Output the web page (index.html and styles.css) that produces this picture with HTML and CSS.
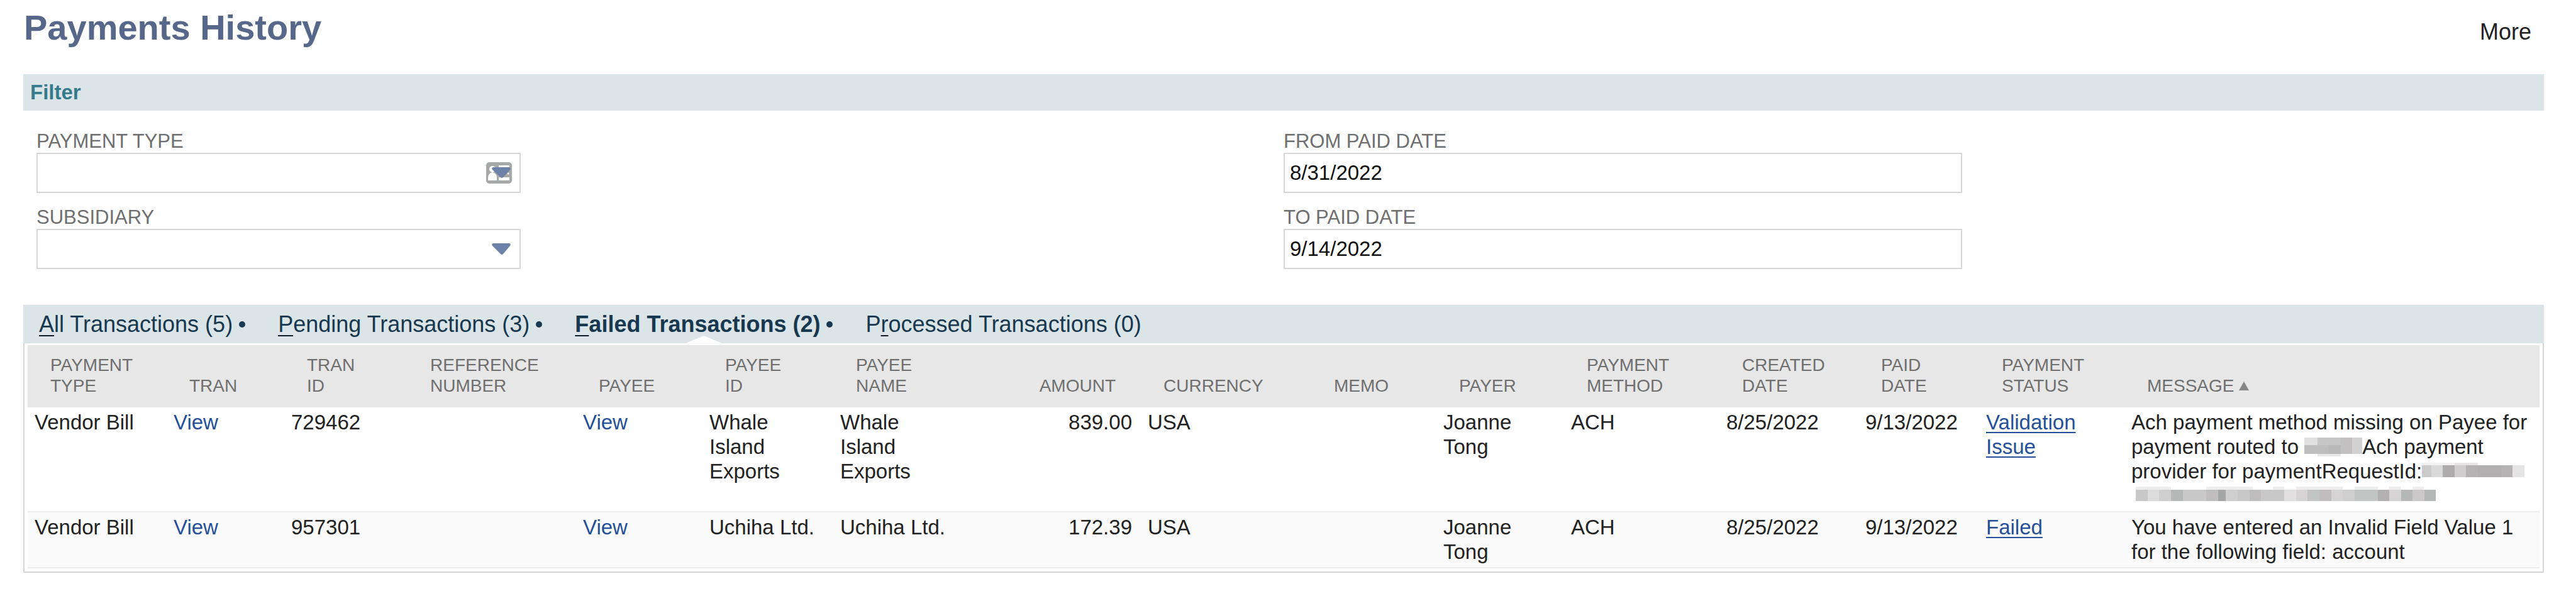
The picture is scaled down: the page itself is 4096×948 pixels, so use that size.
FILE: index.html
```html
<!DOCTYPE html>
<html lang="en">
<head>
    <meta charset="UTF-8">
    <meta name="viewport" content="width=device-width, initial-scale=1.0">
    <title>Payments History</title>
    <link rel="stylesheet" href="styles.css">
</head>
<body>
    <div class="page-header">
        <h1>Payments History</h1>
        <button type="button" class="more-button">More</button>
    </div>

    <h2 class="section-bar">Filter</h2>
    <form class="filters">
        <div class="filter-column">
            <div class="field field-select">
                <label for="paymentType">PAYMENT TYPE</label>
                <div class="control">
                    <select id="paymentType">
                        <option></option>
                    </select>
                    <svg class="select-icon" viewBox="0 0 41 34">
                        <rect x="0" y="0" width="41" height="34" rx="5" fill="#a6a8aa"/>
                        <circle cx="10" cy="11" r="5" fill="#fff"/>
                        <path d="M3 29v-5q0-6 7-8q7 2 7 8v5z" fill="#fff"/>
                        <path d="M20 5h17v3H20zM20 24h17v5H20z" fill="#fff"/>
                        <circle cx="35" cy="18" r="1.5" fill="#fff"/>
                        <path d="M11 8h26q3 1 1 4L27 24q-2 2-4 0L10 12q-2-3 1-4z" fill="#6c82a8"/>
                    </svg>
                </div>
            </div>
            <div class="field field-select">
                <label for="subsidiary">SUBSIDIARY</label>
                <div class="control">
                    <select id="subsidiary">
                        <option></option>
                    </select>
                    <svg class="select-icon" viewBox="0 0 41 34">
                        <path d="M11 8h26q3 1 1 4L27 25q-2 2-4 0L10 12q-2-3 1-4z" fill="#6c82a8"/>
                    </svg>
                </div>
            </div>
        </div>
        <div class="filter-column">
            <div class="field field-date">
                <label for="fromDate">FROM PAID DATE</label>
                <input type="text" id="fromDate" value="8/31/2022">
            </div>
            <div class="field field-date">
                <label for="toDate">TO PAID DATE</label>
                <input type="text" id="toDate" value="9/14/2022">
            </div>
        </div>
    </form>

    <div class="tabs">
        <button type="button" class="tab"><span><u>A</u>ll Transactions (5)</span><i class="dot"></i></button>
        <button type="button" class="tab"><span><u>P</u>ending Transactions (3)</span><i class="dot"></i></button>
        <button type="button" class="tab active"><span><u>F</u>ailed Transactions (2)</span><i class="dot"></i></button>
        <button type="button" class="tab"><span>P<u>r</u>ocessed Transactions (0)</span></button>
    </div>

    <div class="table-container">
        <table>
            <colgroup>
                <col class="col-type">
                <col class="col-tran">
                <col class="col-tran-id">
                <col class="col-reference">
                <col class="col-payee">
                <col class="col-payee-id">
                <col class="col-payee-name">
                <col class="col-amount">
                <col class="col-currency">
                <col class="col-memo">
                <col class="col-payer">
                <col class="col-method">
                <col class="col-created">
                <col class="col-paid">
                <col class="col-status">
                <col>
            </colgroup>
            <thead>
                <tr>
                    <th>PAYMENT<br>TYPE</th>
                    <th>TRAN</th>
                    <th>TRAN<br>ID</th>
                    <th>REFERENCE<br>NUMBER</th>
                    <th>PAYEE</th>
                    <th>PAYEE<br>ID</th>
                    <th>PAYEE<br>NAME</th>
                    <th class="amount">AMOUNT</th>
                    <th>CURRENCY</th>
                    <th>MEMO</th>
                    <th>PAYER</th>
                    <th>PAYMENT<br>METHOD</th>
                    <th>CREATED<br>DATE</th>
                    <th>PAID<br>DATE</th>
                    <th>PAYMENT<br>STATUS</th>
                    <th>MESSAGE<svg class="sort-icon" viewBox="0 0 16 14"><path d="M8 0L16 14H0z" fill="#858585"/></svg></th>
                </tr>
            </thead>
            <tbody>
                <tr>
                    <td>Vendor Bill</td>
                    <td><a href="#">View</a></td>
                    <td>729462</td>
                    <td></td>
                    <td><a href="#">View</a></td>
                    <td>Whale Island Exports</td>
                    <td>Whale Island Exports</td>
                    <td class="amount">839.00</td>
                    <td>USA</td>
                    <td></td>
                    <td>Joanne Tong</td>
                    <td>ACH</td>
                    <td>8/25/2022</td>
                    <td>9/13/2022</td>
                    <td><a href="#" class="status">Validation Issue</a></td>
                    <td>Ach payment method missing on Payee for payment routed to <svg class="mask mask-name" viewBox="0 0 92 30" preserveAspectRatio="none">
                            <path d="M0 0h21v12H0z" fill="#e0e0e0"/>
                            <path d="M21 0h37v12H21z" fill="#c6c6c6"/>
                            <path d="M58 0h18v26H58z" fill="#c2c0c1"/>
                            <path d="M76 0h16v26H76z" fill="#d2d1d2"/>
                            <path d="M0 12h39v14H0z" fill="#bebebe"/>
                            <path d="M39 12h19v14H39z" fill="#b9b9b9"/>
                            <path d="M21 26h37v4H21z" fill="#e8e7e8"/>
                        </svg>Ach payment provider for paymentRequestId:<svg class="mask mask-id" viewBox="0 0 163 23" preserveAspectRatio="none">
                            <path d="M0 0h52v4H0z" fill="#f2f2f2"/>
                            <path d="M52 0h37v4H52z" fill="#e6e4e5"/>
                            <path d="M0 4h15v19H0z" fill="#cacaca"/>
                            <path d="M15 4h18v19H15z" fill="#d9d9d9"/>
                            <path d="M33 4h19v19H33z" fill="#adabac"/>
                            <path d="M52 4h18v19H52z" fill="#cfcdce"/>
                            <path d="M70 4h19v19H70z" fill="#b5b3b4"/>
                            <path d="M89 4h37v19H89z" fill="#b1afb0"/>
                            <path d="M126 4h18v19H126z" fill="#b5b3b4"/>
                            <path d="M144 4h19v19H144z" fill="#e5e4e5"/>
                        </svg> <svg class="mask mask-token" viewBox="0 0 484 27" preserveAspectRatio="none">
                            <path d="M7 0h56v5H7zM119 0h74v5H119zM225 0h18v5H225zM262 0h74v5H262zM355 0h37v5H355zM410 0h18v5H410zM447 0h18v5H447z" fill="#ededed"/>
                            <path d="M7 5h19v18H7zM82 5h37v18H82zM169 5h19v18H169zM206 5h37v18H206z" fill="#c8c8c8"/>
                            <path d="M26 5h18v18H26z" fill="#dcdcdc"/>
                            <path d="M44 5h19v18H44zM150 5h19v18H150zM336 5h19v18H336z" fill="#cfcfcf"/>
                            <path d="M63 5h19v18H63zM429 5h18v18H429zM466 5h18v18H466z" fill="#b6b7b7"/>
                            <path d="M119 5h19v18H119zM188 5h18v18H188zM299 5h19v18H299z" fill="#bfbdbe"/>
                            <path d="M138 5h12v18H138z" fill="#a5a7a6"/>
                            <path d="M243 5h19v18H243z" fill="#e1dfe0"/>
                            <path d="M262 5h18v18H262zM318 5h18v18H318zM410 5h19v18H410z" fill="#d5d3d4"/>
                            <path d="M280 5h19v18H280zM355 5h37v18H355z" fill="#c3c4c4"/>
                            <path d="M392 5h18v18H392z" fill="#b2b0b1"/>
                            <path d="M447 5h19v18H447z" fill="#cac8c9"/>
                        </svg></td>
                </tr>
                <tr>
                    <td>Vendor Bill</td>
                    <td><a href="#">View</a></td>
                    <td>957301</td>
                    <td></td>
                    <td><a href="#">View</a></td>
                    <td>Uchiha Ltd.</td>
                    <td>Uchiha Ltd.</td>
                    <td class="amount">172.39</td>
                    <td>USA</td>
                    <td></td>
                    <td>Joanne Tong</td>
                    <td>ACH</td>
                    <td>8/25/2022</td>
                    <td>9/13/2022</td>
                    <td><a href="#" class="status">Failed</a></td>
                    <td>You have entered an Invalid Field Value 1 for the following field: account</td>
                </tr>
            </tbody>
        </table>
    </div>
</body>
</html>
```

FILE: styles.css
```css
* {
    box-sizing: border-box;
}
body {
    margin: 0;
    padding: 12px 51px 36px 37px;
    font-family: "Liberation Sans", Arial, sans-serif;
    font-size: 33px;
    line-height: 39px;
    color: #222;
    background: #fefefe;
}
button {
    padding: 0;
    border: none;
    background: none;
    font-family: inherit;
    cursor: pointer;
}
.page-header {
    display: flex;
    justify-content: space-between;
    align-items: baseline;
    padding: 0 20px 0 1px;
    margin-bottom: 42px;
}
h1 {
    margin: 0;
    font-size: 56px;
    line-height: 64px;
    color: #56678a;
}
.more-button {
    font-size: 36px;
    color: #222;
}
.section-bar {
    margin: 0;
    padding: 0 11px;
    font-size: 33px;
    line-height: 58px;
    color: #367a8d;
    background: #dbe5e7;
}

/* filters */
.filters {
    display: flex;
    padding: 30px 21px 57px;
}
.filter-column {
    display: flex;
    flex-direction: column;
    gap: 20px;
    width: 50%;
}
.field label {
    display: block;
    font-size: 31px;
    line-height: 37px;
    color: #6f6f6f;
}
.field-select {
    width: 770px;
}
.field-date {
    width: 1079px;
}
.control {
    position: relative;
}
.field input,
.field select {
    display: block;
    width: 100%;
    height: 64px;
    padding: 0 8px;
    border: 2px solid #d6d6d6;
    border-radius: 0;
    background: #fff;
    font-family: inherit;
    font-size: 33px;
    color: #111;
    appearance: none;
}
.select-icon {
    position: absolute;
    top: 15px;
    right: 14px;
    width: 41px;
    height: 34px;
    pointer-events: none;
}

/* tabs */
.tabs {
    display: flex;
    gap: 52px;
    height: 61px;
    padding: 0 25px;
    background: #dbe5e7;
}
.tab {
    position: relative;
    display: flex;
    align-items: center;
    gap: 10px;
    font-size: 36px;
    color: #17384f;
}
.tab u {
    text-decoration-color: #0c1c28;
    text-decoration-thickness: 2px;
    text-underline-offset: 5px;
}
.dot {
    width: 10px;
    height: 10px;
    border-radius: 50%;
    background: #17384f;
}
.tab.active {
    font-weight: bold;
}
.tab.active::after {
    content: "";
    position: absolute;
    bottom: 0;
    left: 50%;
    margin-left: -29px;
    border-left: 29px solid transparent;
    border-right: 29px solid transparent;
    border-bottom: 12px solid #fff;
}

/* transactions table */
.table-container {
    padding: 3px 5px 5px;
    border: 2px solid #d6d6d6;
    border-top: none;
    background: #fff;
}
table {
    width: 100%;
    table-layout: fixed;
    border-collapse: collapse;
}
.col-type { width: 221px; }
.col-tran { width: 187px; }
.col-tran-id { width: 196px; }
.col-reference { width: 268px; }
.col-payee { width: 201px; }
.col-payee-id,
.col-payee-name { width: 208px; }
.col-amount { width: 281px; }
.col-currency { width: 271px; }
.col-memo { width: 199px; }
.col-payer { width: 203px; }
.col-method { width: 247px; }
.col-created { width: 221px; }
.col-paid { width: 192px; }
.col-status { width: 231px; }
th {
    padding: 15px 0 18px 36px;
    font-size: 28px;
    font-weight: normal;
    line-height: 33px;
    text-align: left;
    vertical-align: bottom;
    color: #6f6f6f;
    background: #e7e7e7;
}
td {
    padding: 4px 8px 5px 11px;
    border-bottom: 2px solid #ececec;
    vertical-align: top;
}
tbody tr:nth-child(even) {
    background: #fafafa;
}
th.amount {
    padding-right: 40px;
    text-align: right;
}
td.amount {
    padding-right: 14px;
    text-align: right;
}
td a {
    color: #255099;
    text-decoration: none;
}
td a.status {
    text-decoration: underline;
    text-decoration-thickness: 2px;
    text-underline-offset: 4px;
}
.sort-icon {
    width: 16px;
    height: 14px;
    margin-left: 8px;
    vertical-align: 2px;
}
.mask-name {
    width: 92px;
    height: 30px;
    vertical-align: -4px;
}
.mask-id {
    width: 163px;
    height: 23px;
    vertical-align: 2px;
}
.mask-token {
    width: 484px;
    height: 27px;
    vertical-align: -1px;
}
```
